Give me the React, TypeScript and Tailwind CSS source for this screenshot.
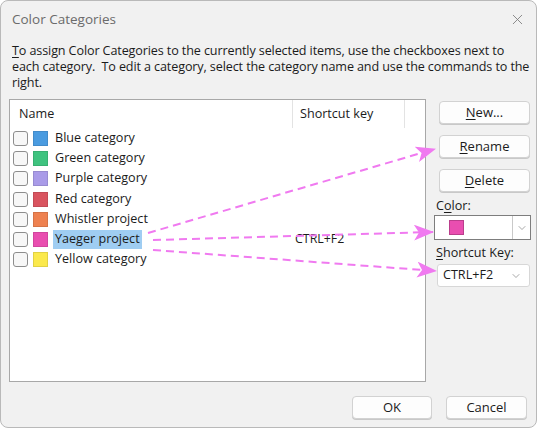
import { ChevronDown, X } from 'lucide-react'

const categories = [
  { name: 'Blue category', color: '#4a9be0' },
  { name: 'Green category', color: '#3fc37f' },
  { name: 'Purple category', color: '#a99be8' },
  { name: 'Red category', color: '#d9545f' },
  { name: 'Whistler project', color: '#ee8150' },
  { name: 'Yaeger project', color: '#e94eb0', key: 'CTRL+F2', selected: true },
  { name: 'Yellow category', color: '#fbe94c' },
]

function Btn({ children, className = '' }: { children: React.ReactNode; className?: string }) {
  return (
    <button
      className={`h-[23px] rounded-[4px] border border-[#d2d2d2] bg-[#fdfdfd] text-[13px] text-[#1b1b1b] shadow-[0_1px_0_#c8c8c8] ${className}`}
    >
      {children}
    </button>
  )
}

export default function App() {
  return (
    <div
      className="relative w-[537px] h-[428px] overflow-hidden rounded-[8px] border border-[#b9b9b9] bg-[#f1f1f1] text-[#1b1b1b]"
      style={{ fontFamily: '"Open Sans", "Noto Sans", sans-serif' }}
    >
      {/* title bar */}
      <div className="flex h-[37px] items-center justify-between pl-[11px] pr-[10px]">
        <span className="text-[13.5px] text-[#6b6b6b]">Color Categories</span>
        <X size={17} strokeWidth={1.2} className="text-[#7a7a7a]" />
      </div>

      <p className="whitespace-nowrap pl-[11px] pt-[5px] text-[12.6px] leading-[16px] tracking-[-0.12px] first-letter:underline first-letter:underline-offset-2">
        To assign Color Categories to the currently selected items, use the checkboxes next to
        <br />
        each category.&nbsp; To edit a category, select the category name and use the commands to the
        <br />
        right.
      </p>

      <div className="flex pt-[8px]">
        {/* list */}
        <div className="ml-[8px] h-[283px] w-[417px] border border-[#a8a8a8] bg-white">
          <div className="flex h-[28px] text-[12.6px]">
            <div className="flex w-[283px] items-center border-r border-[#e3e3e3] pl-[9px]">Name</div>
            <div className="flex w-[112px] items-center border-r border-[#e3e3e3] pl-[7px]">Shortcut key</div>
          </div>
          <div>
            {categories.map(c => (
              <div key={c.name} className="flex h-[20.3px] items-center text-[12.6px]">
                <div className="ml-[3px] h-[15px] w-[15px] rounded-[3px] border border-[#8d8d8d] bg-[#f7f7f7]" />
                <div className="ml-[5px] h-[15px] w-[15px] border border-black/10" style={{ backgroundColor: c.color }} />
                <div className="flex w-[247px]">
                  <span
                    className={`ml-[5px] flex h-[19px] items-center px-[2px] ${c.selected ? 'bg-[#9fcdf2]' : ''}`}
                  >
                    {c.name}
                  </span>
                </div>
                <span className="text-[12.4px]">{c.key}</span>
              </div>
            ))}
          </div>
        </div>

        {/* side */}
        <div className="ml-[8px] flex w-[96px] flex-col pt-[2px]">
          <Btn className="ml-[5px] w-[91px] first-letter:underline first-letter:underline-offset-2">New...</Btn>
          <Btn className="ml-[5px] mt-[11px] w-[91px] first-letter:underline first-letter:underline-offset-2">Rename</Btn>
          <Btn className="ml-[5px] mt-[11px] w-[91px] first-letter:underline first-letter:underline-offset-2">Delete</Btn>
          <div className="mt-[5px] h-[17px] pl-[2px] text-[12.6px] leading-[17px]">
            C<span className="underline underline-offset-2">o</span>lor:
          </div>
          <div className="mt-[1px] flex h-[25px] w-[97px] border border-[#7d7d7d] bg-white">
            <div className="flex flex-1 items-center pl-[14px]">
              <div className="h-[15px] w-[15px] border border-black/20 bg-[#e94eb0]" />
            </div>
            <div className="flex w-[18px] items-center justify-center border-l border-[#c9c9c9]">
              <ChevronDown size={12} strokeWidth={1.2} className="text-[#6d6d6d]" />
            </div>
          </div>
          <div className="mt-[4px] h-[17px] pl-[2px] text-[12.6px] leading-[17px] first-letter:underline first-letter:underline-offset-2">
            Shortcut Key:
          </div>
          <div className="ml-[3px] mt-[3px] flex h-[23px] w-[93px] items-center justify-between rounded-[3px] border border-[#d7d7d7] bg-white pl-[5px] pr-[7px] text-[12.6px]">
            <span>CTRL+F2</span>
            <ChevronDown size={12} strokeWidth={1.2} className="text-[#6d6d6d]" />
          </div>
        </div>
      </div>

      {/* footer */}
      <div className="flex justify-end gap-[14px] pr-[9px] pt-[14px]">
        <Btn className="w-[80px]">OK</Btn>
        <Btn className="w-[81px]">Cancel</Btn>
      </div>

      {/* annotation arrows */}
      <svg className="pointer-events-none absolute left-0 top-0" width="537" height="428">
        <defs>
          <marker id="head" viewBox="0 0 20 16" refX="19" refY="8" markerWidth="20" markerHeight="16" markerUnits="userSpaceOnUse" orient="auto">
            <path d="M0 0 L20 8 L0 16 L5 8 Z" fill="#f07af0" />
          </marker>
        </defs>
        <g stroke="#f07af0" strokeWidth="2" strokeDasharray="8 5" fill="none">
          <line x1="147" y1="232" x2="434" y2="148" markerEnd="url(#head)" />
          <line x1="152" y1="239" x2="432" y2="231" markerEnd="url(#head)" />
          <line x1="152" y1="249" x2="435" y2="270" markerEnd="url(#head)" />
        </g>
      </svg>
    </div>
  )
}
